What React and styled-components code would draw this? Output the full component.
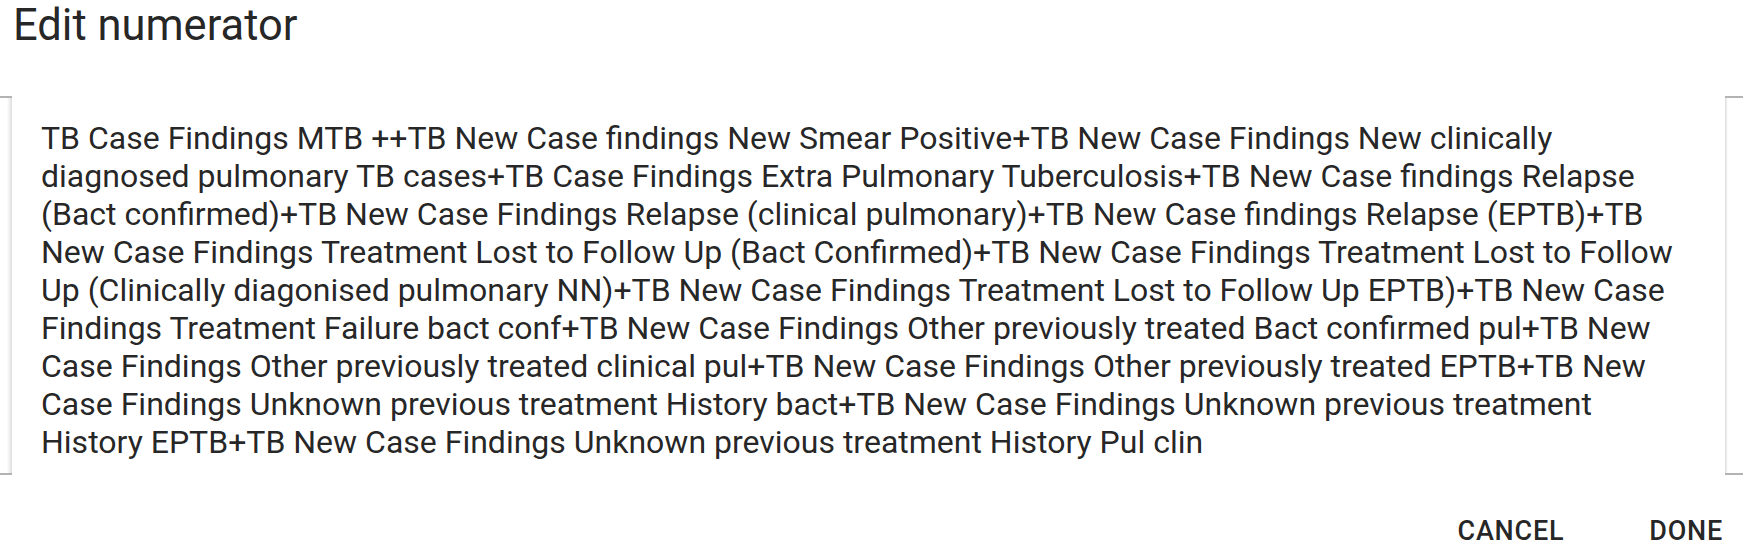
import React from "react";
import styled, { createGlobalStyle } from "styled-components";

const Global = createGlobalStyle`
  html, body { margin: 0; padding: 0; background: #ffffff; }
  body { font-family: Roboto, "Noto Sans", "Liberation Sans", sans-serif; color: rgba(0,0,0,0.87); }
`;

const Dialog = styled.div`
  width: 1743px;
  height: 555px;
  display: flex;
  flex-direction: column;
  overflow: hidden;
`;

const Title = styled.h2`
  margin: 0;
  padding-left: 13px;
  font-size: 43.5px;
  font-weight: 400;
  line-height: normal;
  color: rgba(0,0,0,0.87);
`;

const Frame = styled.div`
  margin-top: 45px;
  height: 380px;
  display: flex;
`;

const Edge = styled.div`
  box-sizing: border-box;
  width: ${(p) => p.$w}px;
  border-top: 2px solid #b3b3b3;
  border-bottom: 2px solid #b3b3b3;
  background: linear-gradient(
    ${(p) => (p.$side === "left" ? "to right" : "to left")},
    #ffffff 0%,
    #ffffff ${(p) => (p.$side === "left" ? 55 : 60)}%,
    #ececec ${(p) => (p.$side === "left" ? 85 : 80)}%,
    #dcdcdc 100%
  );
  ${(p) => (p.$side === "left" ? "" : "background-size: 7px 100%; background-repeat: no-repeat; background-color: #ffffff;")}
`;

const Field = styled.div`
  flex: 1;
  box-sizing: border-box;
  padding: 23px 45px 0 29px;
  font-size: 32px;
  line-height: 38px;
  color: rgba(0,0,0,0.87);
  white-space: pre-wrap;
  word-wrap: break-word;
`;

const Actions = styled.div`
  margin-top: 33px;
  display: flex;
  justify-content: flex-end;
  gap: 85px;
  padding-right: 20px;
`;

const Button = styled.button`
  border: 0;
  background: transparent;
  padding: 0;
  font-family: Roboto, "Noto Sans", "Liberation Sans", sans-serif;
  font-size: 27px;
  font-weight: 500;
  letter-spacing: 0.02857em;
  line-height: 47px;
  text-transform: uppercase;
  color: rgba(0,0,0,0.87);
  cursor: pointer;
`;

const TEXT =
  "TB Case Findings MTB ++TB New Case findings New Smear Positive+TB New Case Findings New clinically diagnosed pulmonary TB cases+TB Case Findings Extra Pulmonary Tuberculosis+TB New Case findings Relapse (Bact confirmed)+TB New Case Findings Relapse (clinical pulmonary)+TB New Case findings Relapse (EPTB)+TB New Case Findings Treatment Lost to Follow Up (Bact Confirmed)+TB New Case Findings Treatment Lost to Follow Up (Clinically diagonised pulmonary NN)+TB New Case Findings Treatment Lost to Follow Up EPTB)+TB New Case Findings Treatment Failure bact conf+TB New Case Findings Other previously treated Bact confirmed pul+TB New Case Findings Other previously treated clinical pul+TB New Case Findings Other previously treated EPTB+TB New Case Findings Unknown previous treatment History bact+TB New Case Findings Unknown previous treatment History EPTB+TB New Case Findings Unknown previous treatment History Pul clin";

export default function App() {
  return (
    <>
      <Global />
      <Dialog>
        <Title>Edit numerator</Title>
        <Frame>
          <Edge $side="left" $w={12} />
          <Field>{TEXT}</Field>
          <Edge $side="right" $w={18} />
        </Frame>
        <Actions>
          <Button>Cancel</Button>
          <Button>Done</Button>
        </Actions>
      </Dialog>
    </>
  );
}
